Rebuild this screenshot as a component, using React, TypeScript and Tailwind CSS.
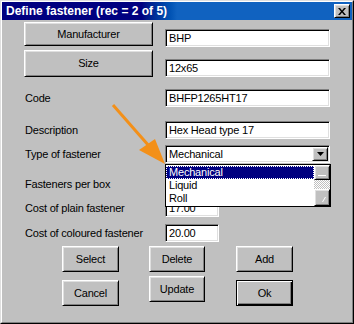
import React from "react";

const btn =
  "flex items-center justify-center bg-[#c0c0c0] text-black border border-t-white border-l-white border-r-black border-b-black shadow-[inset_1px_1px_0_#dfdfdf,inset_-1px_-1px_0_#808080]";
const sunken =
  "bg-white border border-t-[#808080] border-l-[#808080] border-r-white border-b-white shadow-[inset_1px_1px_0_#000,inset_-1px_-1px_0_#dfdfdf]";

const Field = ({ label, value, width = "w-[165px]", top }: { label: string; value: string; width?: string; top: string }) => (
  <div className={`flex items-center h-[18px] ${top}`}>
    <div className="w-[140px] ml-[23px] truncate">{label}</div>
    <div className={`${sunken} ${width} h-[18px] pl-[3px] flex items-center`}>{value}</div>
  </div>
);

const App: React.FC = () => {
  return (
    <div className="relative w-[354px] h-[324px] bg-[#c0c0c0] border border-t-[#dfdfdf] border-l-[#dfdfdf] border-r-black border-b-black font-['Liberation_Sans',Arial,sans-serif] text-[11px] tracking-[-0.2px] text-black overflow-hidden">
      <div className="w-full h-full border border-t-white border-l-white border-r-[#808080] border-b-[#808080]">
        {/* title bar */}
        <div className="h-[18px] flex items-center justify-between pl-[4px] pr-[2px] bg-gradient-to-r from-[#000080] from-40% to-[#1062c0] to-50%">
          <span className="text-white font-bold text-[12px] tracking-normal">Define fastener (rec = 2 of 5)</span>
          <div className={`${btn} w-[16px] h-[14px]`}>
            <svg width="8" height="7" viewBox="0 0 8 7">
              <path d="M0 0h2l2 2.5L6 0h2L5 3.5 8 7H6L4 4.5 2 7H0l3-3.5z" fill="#000" />
            </svg>
          </div>
        </div>

        {/* top buttons */}
        <div className="flex items-start mt-[2px]">
          <div className={`${btn} ml-[22px] w-[129px] h-[24px]`}>Manufacturer</div>
          <div className={`${sunken} ml-[12px] mt-[7px] w-[165px] h-[18px] pl-[3px] flex items-center`}>BHP</div>
        </div>
        <div className="flex items-start mt-[3px]">
          <div className={`${btn} ml-[22px] w-[129px] h-[27px]`}>Size</div>
          <div className={`${sunken} ml-[12px] mt-[9px] w-[165px] h-[18px] pl-[3px] flex items-center`}>12x65</div>
        </div>

        <Field label="Code" value="BHFP1265HT17" top="mt-[12px]" />
        <Field label="Description" value="Hex Head type 17" top="mt-[14px]" />

        <div className="flex items-center h-[18px] mt-[6px]">
          <div className="w-[140px] ml-[23px]">Type of fastener</div>
          <div className={`${sunken} w-[165px] h-[18px] p-[1px] flex items-stretch`}>
            <div className="flex-1 pl-[2px] flex items-center">Mechanical</div>
            <div className={`${btn} w-[16px]`}>
              <svg width="7" height="4" viewBox="0 0 7 4">
                <path d="M0 0h7L3.5 4z" fill="#000" />
              </svg>
            </div>
          </div>
        </div>

        <Field label="Fasteners per box" value="" width="w-[54px]" top="mt-[12px]" />
        <Field label="Cost of plain fastener" value="17.00" width="w-[54px]" top="mt-[6px]" />
        <Field label="Cost of coloured fastener" value="20.00" width="w-[54px]" top="mt-[7px]" />

        {/* bottom buttons */}
        <div className="flex items-start mt-[4px]">
          <div className={`${btn} ml-[60px] w-[57px] h-[26px]`}>Select</div>
          <div className={`${btn} ml-[30px] w-[56px] h-[26px]`}>Delete</div>
          <div className={`${btn} ml-[31px] w-[57px] h-[26px]`}>Add</div>
        </div>
        <div className="flex items-start mt-[4px]">
          <div className={`${btn} ml-[60px] mt-[4px] w-[57px] h-[26px]`}>Cancel</div>
          <div className={`${btn} ml-[30px] w-[56px] h-[26px]`}>Update</div>
          <div className="ml-[31px] mt-[4px] w-[57px] h-[26px] border border-black flex items-center justify-center bg-[#c0c0c0] shadow-[inset_1px_1px_0_#fff,inset_-1px_-1px_0_#000,inset_-2px_-2px_0_#808080]">
            Ok
          </div>
        </div>
      </div>

      {/* open dropdown list */}
      <div className="absolute left-[164px] top-[163px] w-[166px] h-[43px] bg-white border border-black flex">
        <div className="flex-1 flex flex-col pt-[1px]">
          <div className="h-[13px] bg-[#000080] text-white border border-dotted border-white flex items-center pl-[2px]">Mechanical</div>
          <div className="h-[13px] flex items-center pl-[3px]">Liquid</div>
          <div className="h-[13px] flex items-center pl-[3px]">Roll</div>
        </div>
        <div className="w-[16px] flex flex-col">
          <div className={`${btn} h-[15px] items-end pb-[3px]`}>
            <div className="w-[8px] h-[1px] bg-white" />
          </div>
          <div className="h-[9px] bg-[repeating-conic-gradient(#fff_0_25%,#c0c0c0_0_50%)] bg-[length:2px_2px]" />
          <div className={`${btn} flex-1 items-end justify-end pb-[3px] pr-[3px]`}>
            <svg width="4" height="5" viewBox="0 0 4 5">
              <path d="M3 0h1L1 5H0z" fill="#fff" />
            </svg>
          </div>
        </div>
      </div>

      {/* orange pointer arrow */}
      <svg className="absolute left-0 top-0 pointer-events-none" width="354" height="324" viewBox="0 0 354 324">
        <path d="M112 104L148 145" stroke="#f39019" strokeWidth="3" />
        <path d="M164 163L138 149L154 138z" fill="#f39019" />
      </svg>
    </div>
  );
};

export default App;
